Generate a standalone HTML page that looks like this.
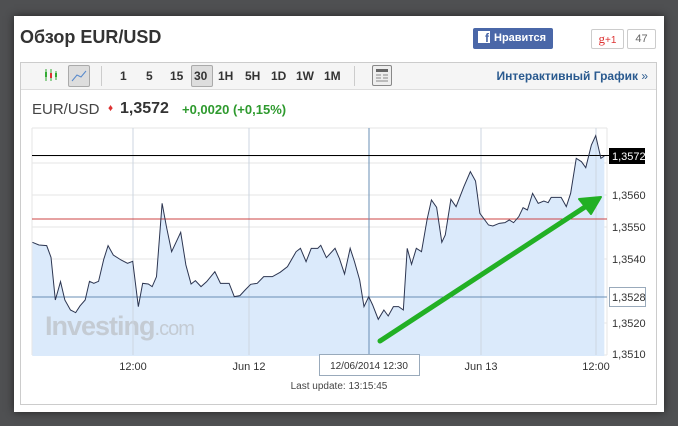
<!DOCTYPE html><html><head><meta charset="utf-8"><style>
body{margin:0;width:678px;height:426px;background:#4f5052;font-family:"Liberation Sans",sans-serif;position:relative;overflow:hidden}
.card{position:absolute;left:14px;top:16px;width:650px;height:396px;background:#fff;box-shadow:0 0 8px #222}
.a{position:absolute;white-space:nowrap}
</style></head><body>
<div class="card"></div>
<div class="a" style="left:20px;top:27px;font-size:18px;font-weight:bold;color:#333">Обзор EUR/USD</div>
<div class="a" style="left:473px;top:28px;width:80px;height:21px;background:#4a67a8;border-radius:2px;color:#fff;font-size:11px;font-weight:bold;line-height:21px"><span style="display:inline-block;width:12px;height:12px;background:#fff;color:#4a67a8;margin:0 4px 0 5px;vertical-align:-2px;text-align:right;font-size:12px;line-height:14px;overflow:hidden;padding-right:1px;box-sizing:border-box">f</span>Нравится</div>
<div class="a" style="left:591px;top:29px;width:31px;height:18px;border:1px solid #ccc;border-radius:2px;color:#d33;font-size:13px;line-height:18px;text-align:center;font-family:'Liberation Serif',serif">g<span style="font-size:10px;font-family:'Liberation Sans'">+1</span></div>
<div class="a" style="left:627px;top:29px;width:27px;height:18px;border:1px solid #ccc;border-radius:2px;color:#666;font-size:11px;line-height:18px;text-align:center">47</div>
<div class="a" style="left:20px;top:62px;width:635px;height:341px;border:1px solid #ccc"></div>
<div class="a" style="left:21px;top:63px;width:635px;height:26px;background:#f5f5f5;border-bottom:1px solid #ddd"></div>
<svg class="a" style="left:44px;top:68px" width="14" height="14"><path d="M2 1v12M7 1v12M12 3v9" stroke="#3a3" /><rect x="1" y="4" width="2" height="5" fill="#3a3"/><rect x="6" y="5" width="2" height="5" fill="#d33"/><rect x="11" y="5" width="2" height="4" fill="#3a3"/></svg>
<div class="a" style="left:68px;top:65px;width:20px;height:20px;border:1px solid #aaa;background:#ddd;border-radius:2px"><svg width="20" height="20"><path d="M3 15L8 9 12 11 17 5" stroke="#58c" fill="none"/></svg></div>
<div class="a" style="left:101px;top:66px;width:1px;height:20px;background:#ccc"></div>
<div class="a" style="left:354px;top:66px;width:1px;height:20px;background:#ccc"></div>
<div class="a" style="left:191px;top:65px;width:20px;height:20px;border:1px solid #aaa;background:#ddd;border-radius:2px"></div>
<div class="a" style="top:69px;font-size:12px;font-weight:bold;color:#333;left:0">
<span class="a" style="left:120px">1</span><span class="a" style="left:146px">5</span><span class="a" style="left:170px">15</span><span class="a" style="left:194px">30</span><span class="a" style="left:218px">1H</span><span class="a" style="left:245px">5H</span><span class="a" style="left:271px">1D</span><span class="a" style="left:296px">1W</span><span class="a" style="left:324px">1M</span></div>
<div class="a" style="left:372px;top:65px;width:18px;height:19px;border:1px solid #888;background:#eee;border-radius:2px"><svg width="18" height="19"><rect x="3" y="3" width="12" height="3" fill="#666"/><path d="M3 9h5M3 12h5M3 15h12M10 9h5M10 12h5" stroke="#888"/></svg></div>
<div class="a" style="right:30px;top:69px;font-size:12px;font-weight:bold;color:#2a5a8f">Интерактивный График <span style="font-weight:normal">»</span></div>
<div class="a" style="left:32px;top:101px;font-size:15px;color:#444">EUR/USD</div>
<div class="a" style="left:108px;top:103px;color:#d33;font-size:10px">♦</div>
<div class="a" style="left:120px;top:100px;font-size:16px;font-weight:bold;color:#333">1,3572</div>
<div class="a" style="left:182px;top:102px;font-size:13px;font-weight:bold;color:#2e9a2e">+0,0020 (+0,15%)</div>
<svg class="a" style="left:0;top:0" width="678" height="426">
<g stroke="#e6e6e6"><path d="M32 128h575M32 156h575M32 163h575M32 195h575M32 227h575M32 259h575M32 323h575M32 355h575M32 128v227M133 128v227M249 128v227M481 128v227M596 128v227M607 128v227"/></g>
<g transform="translate(0,120) scale(0.4323,0.3333)">
<polyline fill="#dbeafb" stroke="none" points="75,708 75,367 90,375 108,377 118,412 128,540 140,485 150,540 163,570 175,578 185,558 197,540 207,484 217,490 228,484 240,418 250,377 262,405 280,420 295,430 307,424 320,560 330,490 343,492 352,500 362,470 375,250 385,320 397,395 418,337 430,435 442,492 452,482 465,500 478,485 497,455 510,490 530,490 542,530 555,527 567,510 580,493 595,490 610,470 630,470 648,457 665,440 685,395 695,385 708,425 720,385 735,385 742,376 755,413 775,385 785,415 797,462 810,385 820,425 832,480 842,560 853,530 862,555 875,598 888,570 898,588 910,560 922,560 933,570 942,385 952,433 963,385 975,395 988,298 998,240 1010,262 1022,367 1030,345 1043,238 1055,260 1073,200 1088,155 1100,183 1110,280 1130,315 1140,318 1155,310 1168,308 1178,300 1188,308 1200,290 1210,263 1220,270 1232,220 1245,250 1258,243 1268,248 1275,232 1298,232 1310,260 1320,220 1333,115 1345,125 1355,143 1368,75 1378,47 1390,115 1398,108 1398,708"/>
</g>
<text x="45" y="335" font-size="27" font-weight="bold" fill="#c4cbd3" font-family="Liberation Sans" letter-spacing="-1">Investing<tspan font-weight="normal" font-size="20">.com</tspan></text>
<g stroke="#ccd5e0"><path d="M133 128v227M249 128v227M481 128v227M596 128v227"/></g>
<path d="M32 219h575" stroke="#c44" stroke-width="1"/>
<path d="M32 297h575" stroke="#6a8fb5"/>
<path d="M369 128v227" stroke="#6a8fb5"/>
<path d="M32 155.5h577" stroke="#000"/>
<g transform="translate(0,120) scale(0.4323,0.3333)">
<polyline vector-effect="non-scaling-stroke" fill="none" stroke="#2c3550" stroke-width="1" points="75,367 90,375 108,377 118,412 128,540 140,485 150,540 163,570 175,578 185,558 197,540 207,484 217,490 228,484 240,418 250,377 262,405 280,420 295,430 307,424 320,560 330,490 343,492 352,500 362,470 375,250 385,320 397,395 418,337 430,435 442,492 452,482 465,500 478,485 497,455 510,490 530,490 542,530 555,527 567,510 580,493 595,490 610,470 630,470 648,457 665,440 685,395 695,385 708,425 720,385 735,385 742,376 755,413 775,385 785,415 797,462 810,385 820,425 832,480 842,560 853,530 862,555 875,598 888,570 898,588 910,560 922,560 933,570 942,385 952,433 963,385 975,395 988,298 998,240 1010,262 1022,367 1030,345 1043,238 1055,260 1073,200 1088,155 1100,183 1110,280 1130,315 1140,318 1155,310 1168,308 1178,300 1188,308 1200,290 1210,263 1220,270 1232,220 1245,250 1258,243 1268,248 1275,232 1298,232 1310,260 1320,220 1333,115 1345,125 1355,143 1368,75 1378,47 1390,115 1398,108"/>
</g>
<path d="M380 341L588 205" stroke="#22b024" stroke-width="5" stroke-linecap="round"/>
<path d="M601 197L579 199 591 214Z" fill="#22b024" stroke="#22b024" stroke-width="2" stroke-linejoin="round"/>
<g font-family="Liberation Sans" font-size="11" fill="#333">
<text x="612" y="199">1,3560</text><text x="612" y="231">1,3550</text><text x="612" y="263">1,3540</text><text x="612" y="327">1,3520</text><text x="612" y="358">1,3510</text>
<text x="133" y="370" text-anchor="middle">12:00</text><text x="249" y="370" text-anchor="middle">Jun 12</text><text x="481" y="370" text-anchor="middle">Jun 13</text><text x="596" y="370" text-anchor="middle">12:00</text>
</g>
<rect x="609" y="148" width="36" height="16" fill="#000"/><text x="612" y="160" font-family="Liberation Sans" font-size="11" fill="#fff">1,3572</text>
<rect x="609.5" y="287.5" width="36" height="19" fill="#fff" stroke="#9ab"/><text x="612" y="301" font-family="Liberation Sans" font-size="11" fill="#333">1,3528</text>
<rect x="319.5" y="354.5" width="100" height="21" fill="#fff" stroke="#9ab"/><text x="369" y="369" text-anchor="middle" font-family="Liberation Sans" font-size="10" fill="#333">12/06/2014 12:30</text>
<text x="339" y="389" text-anchor="middle" font-family="Liberation Sans" font-size="10" fill="#444">Last update: 13:15:45</text>
</svg>
</body></html>
